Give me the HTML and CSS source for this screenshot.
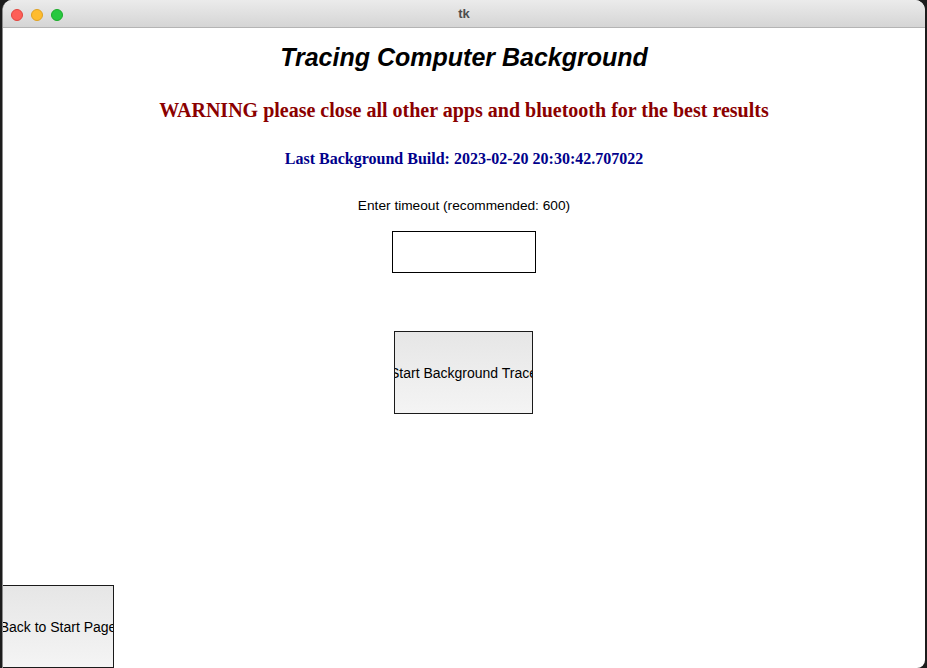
FILE: index.html
```html
<!DOCTYPE html>
<html lang="en">
<head>
<meta charset="utf-8">
<title>tk</title>
<link rel="stylesheet" href="styles.css">
</head>
<body>
<div class="window">
  <div class="titlebar">
    <div class="lights">
      <span class="light red"></span>
      <span class="light yellow"></span>
      <span class="light green"></span>
    </div>
    <div class="title">tk</div>
  </div>
  <div class="content">
    <h1 class="heading">Tracing Computer Background</h1>
    <p class="warning">WARNING please close all other apps and bluetooth for the best results</p>
    <p class="build">Last Background Build: 2023-02-20 20:30:42.707022</p>
    <p class="label">Enter timeout (recommended: 600)</p>
    <input class="entry" type="text">
    <button class="btn start"><span>Start Background Trace</span></button>
    <button class="btn back"><span>Back to Start Page</span></button>
  </div>
</div>
</body>
</html>
```
FILE: styles.css
```css
html, body {
  margin: 0;
  padding: 0;
  height: 100%;
  background: #1c1c1c;
  overflow: hidden;
}
.window {
  margin-left: 2px;
  width: 923px;
  height: 668px;
  background: #ffffff;
  border-radius: 10px 10px 8px 0;
  overflow: hidden;
  display: flex;
  flex-direction: column;
  box-sizing: border-box;
  border-left: 1px solid #8a8a8a;
}
.titlebar {
  height: 28px;
  flex: none;
  background: linear-gradient(#ebebeb, #d5d5d5);
  border-bottom: 1px solid #b4b4b4;
  box-sizing: border-box;
  position: relative;
  display: flex;
  align-items: center;
  justify-content: center;
}
.lights {
  position: absolute;
  left: 8px;
  top: 9px;
  display: flex;
  gap: 8px;
}
.light {
  width: 12px;
  height: 12px;
  border-radius: 50%;
  box-sizing: border-box;
}
.red { background: #fe5f57; border: 1px solid #e0443e; }
.yellow { background: #febc2e; border: 1px solid #dea123; }
.green { background: #28c840; border: 1px solid #1aab29; }
.title {
  font-family: "Liberation Sans", Arial, sans-serif;
  font-weight: bold;
  font-size: 13px;
  color: #4d4d4d;
}
.content {
  flex: 1;
  display: flex;
  flex-direction: column;
  align-items: center;
  min-height: 0;
}
.heading {
  margin: 15px 0 0;
  font-family: "Liberation Sans", Arial, sans-serif;
  font-style: italic;
  font-weight: bold;
  font-size: 25px;
  line-height: 28px;
  color: #000;
}
.warning {
  margin: 27px 0 0;
  font-family: "Liberation Serif", "Times New Roman", serif;
  font-weight: bold;
  font-size: 20px;
  line-height: 24px;
  color: #8b0000;
}
.build {
  margin: 27px 0 0;
  font-family: "Liberation Serif", "Times New Roman", serif;
  font-weight: bold;
  font-size: 16px;
  line-height: 20px;
  color: #00008b;
}
.label {
  margin: 29px 0 0;
  font-family: "Liberation Sans", Arial, sans-serif;
  font-size: 13.7px;
  line-height: 16px;
  color: #000;
}
.entry {
  margin: 17px 0 0;
  width: 144px;
  height: 42px;
  box-sizing: border-box;
  border: 1px solid #000;
  background: #fff;
  padding: 0;
  outline: none;
}
.btn {
  box-sizing: border-box;
  border: 1px solid #1a1a1a;
  background: linear-gradient(#e6e6e6, #f4f4f4);
  padding: 0;
  margin: 0;
  display: flex;
  align-items: center;
  justify-content: center;
  overflow: hidden;
  font-family: "Liberation Sans", Arial, sans-serif;
  font-size: 14px;
  color: #000;
  white-space: nowrap;
  border-radius: 0;
}
.btn span {
  flex: none;
}
.start {
  margin-top: 58px;
  margin-left: -1px;
  width: 139px;
  height: 83px;
}
.back {
  margin-top: auto;
  align-self: flex-start;
  width: 112px;
  height: 83px;
  margin-left: -1px;
  flex: none;
}
```
